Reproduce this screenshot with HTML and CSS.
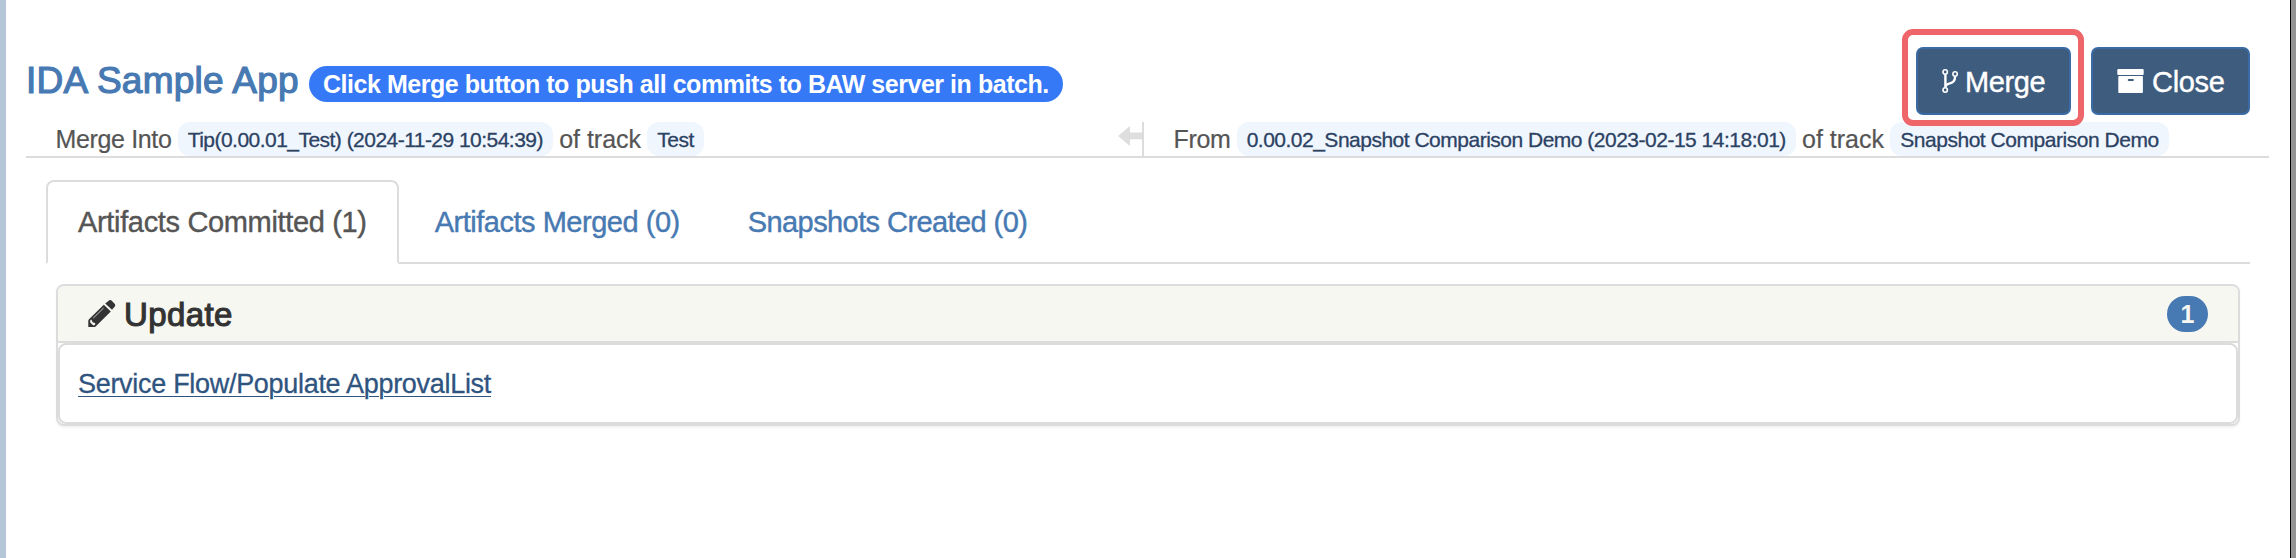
FILE: index.html
```
<!DOCTYPE html>
<html lang="en">
<head>
<meta charset="utf-8">
<title>IDA Sample App</title>
<link rel="stylesheet" href="styles.css">
</head>
<body>
<main class="page">
  <header class="topbar">
    <div class="heading">
      <h1 class="title">IDA Sample App</h1>
      <span class="hint">Click Merge button to push all commits to BAW server in batch.</span>
    </div>
    <div class="actions">
      <div class="highlight">
        <button class="btn" type="button">
          <svg class="icon-branch" viewBox="0 0 16 24" width="16" height="24" fill="none" stroke="#fff">
            <circle cx="3.2" cy="3" r="2.2" stroke-width="1.6"/>
            <circle cx="3.2" cy="21" r="2.2" stroke-width="1.6"/>
            <circle cx="13.1" cy="5" r="2.2" stroke-width="1.6"/>
            <path d="M3.4 5.5V18.6M13.1 7.4C13.1 13 10 14 7 14.6C4.6 15.2 3.6 16 3.4 18" stroke-width="2.4"/>
          </svg>
          <span>Merge</span>
        </button>
      </div>
      <button class="btn btn-close" type="button">
        <svg class="icon-archive" viewBox="0 0 27 24" width="27" height="24">
          <rect x="0.3" y="0" width="26.4" height="6" rx="1" fill="#fff"/>
          <rect x="1.3" y="7" width="24.6" height="17" rx="0.8" fill="#fff"/>
          <rect x="10.8" y="10" width="6" height="2" rx="0.8" fill="#3e5c7e"/>
        </svg>
        <span>Close</span>
      </button>
    </div>
  </header>

  <section class="merge-info">
    <div class="side side-target">
      <span class="label">Merge Into</span>
      <span class="tag">Tip(0.00.01_Test) (2024-11-29 10:54:39)</span>
      <span class="label of-track">of track</span>
      <span class="tag">Test</span>
      <svg class="arrow" viewBox="0 0 24 20" width="24" height="20"><path d="M0 10L12 0V6.5H24V13.2H12V20Z" fill="#dedede"/></svg>
    </div>
    <div class="side side-source">
      <span class="label">From</span>
      <span class="tag">0.00.02_Snapshot Comparison Demo (2023-02-15 14:18:01)</span>
      <span class="label of-track">of track</span>
      <span class="tag tag-wide">Snapshot Comparison Demo</span>
    </div>
  </section>

  <nav class="tabs">
    <a class="tab tab-active">Artifacts Committed (1)</a>
    <a class="tab">Artifacts Merged (0)</a>
    <a class="tab tab-tight">Snapshots Created (0)</a>
  </nav>

  <section class="panel">
    <div class="panel-head">
      <svg class="icon-pencil" viewBox="0 0 28 28" width="28" height="28">
        <path d="M17.2 3.4L21 0.4Q22.3 -0.5 23.5 0.6L26.6 3.7Q27.8 5 26.8 6.4L24 9.8Z" fill="#333"/>
        <path d="M15.8 4.8L22.8 11.6L7.6 26.4Q7 27 6 27H0.3V20.8Q0.3 20 1 19.3Z" fill="#333"/>
        <path d="M5.2 18.2L15.6 8" stroke="#c8c9c4" stroke-width="1" fill="none"/>
        <path d="M2.2 20.2L3.4 19.6L4.6 22.2L7.4 23.2L6.8 25L5.4 25.4L2.2 22.4Z" fill="#f6f7f0"/>
      </svg>
      <h2 class="panel-title">Update</h2>
      <span class="badge">1</span>
    </div>
    <div class="panel-item"><a class="link" href="#">Service Flow/Populate ApprovalList</a></div>
  </section>
</main>
</body>
</html>
```
FILE: styles.css
```
* { box-sizing: border-box; }

body {
  margin: 0;
  background: #fff;
  font-family: "Liberation Sans", Arial, Helvetica, sans-serif;
  color: #555;
}

.page {
  height: 558px;
  padding-left: 20px;
  padding-right: 22px;
  border-left: 6px solid #b4c6d8;
  border-right: 5px solid #949494;
  box-shadow: inset -1px 0 0 #000;
  overflow: hidden;
}

.topbar {
  display: flex;
  justify-content: space-between;
  align-items: flex-start;
  height: 122px;
  padding: 29px 19px 0 0;
}

.heading {
  display: flex;
  align-items: flex-start;
  padding-top: 29px;
}

.title {
  margin: 0;
  padding-top: 1px;
  width: 283px;
  font-size: 37px;
  line-height: 44px;
  font-weight: 400;
  letter-spacing: 0.25px;
  color: #4779b2;
  -webkit-text-stroke: 1.2px #4779b2;
  white-space: nowrap;
}

.hint {
  height: 36px;
  margin-top: 8px;
  padding: 1px 14px 0;
  border-radius: 18px;
  background: #3579f6;
  color: #fff;
  font-size: 25px;
  line-height: 35px;
  font-weight: 700;
  letter-spacing: -0.46px;
  white-space: nowrap;
}

.actions { display: flex; }

.highlight {
  position: relative;
  z-index: 1;
  height: 97px;
  width: 182px;
  padding: 12px 8px;
  border: 6px solid #ee656a;
  border-radius: 11px;
}

.btn {
  display: flex;
  align-items: center;
  width: 155px;
  height: 68px;
  padding: 0 0 0 24px;
  border: 2px solid #3a6ba5;
  border-radius: 7px;
  background: #3e5c7e;
  color: #fff;
  font-family: inherit;
  font-size: 29px;
  line-height: 62px;
  letter-spacing: -0.4px;
  -webkit-text-stroke: 0.4px #fff;
}

.btn span { padding-top: 2px; }

.btn-close {
  width: 159px;
  margin: 18px 0 0 7px;
  letter-spacing: -0.3px;
}

.icon-branch { margin-right: 7px; }
.icon-archive { margin-right: 8px; }

.merge-info {
  display: grid;
  grid-template-columns: 1116px 1fr;
  height: 36px;
  border-bottom: 2px solid #dcdcdc;
  font-size: 25px;
  line-height: 34px;
  letter-spacing: -0.35px;
  white-space: nowrap;
}

.side {
  display: flex;
  gap: 6.2px;
  padding-left: 29.5px;
}

.side-source { border-left: 2px solid #dcdcdc; }

.label { -webkit-text-stroke: 0.2px #555; }
.of-track { letter-spacing: 0; }

.tag {
  height: 34px;
  padding: 2px 10px 0;
  border-radius: 12px;
  background: #f0f6fe;
  color: #2c4263;
  font-size: 21px;
  line-height: 32px;
  letter-spacing: -0.53px;
  -webkit-text-stroke: 0.3px #2c4263;
}

.side-source .tag { letter-spacing: -0.5px; }
.side-source .tag-wide { letter-spacing: -0.46px; }

.arrow {
  margin: 4px 0 0 auto;
}

.tabs {
  display: flex;
  gap: 4px;
  height: 84px;
  margin: 22px 19px 0 20px;
  border-bottom: 2px solid #dcdcdc;
}

.tab {
  height: 84px;
  padding: 0 30px;
  border: 2px solid transparent;
  font-size: 29px;
  line-height: 80px;
  letter-spacing: -0.48px;
  color: #4779b2;
  -webkit-text-stroke: 0.4px #4779b2;
  white-space: nowrap;
}

.tab-tight { letter-spacing: -0.58px; }

.tab-active {
  border-color: #dcdcdc #dcdcdc #fff;
  border-radius: 8px 8px 0 0;
  background: #fff;
  color: #555;
  letter-spacing: -0.34px;
  -webkit-text-stroke-color: #555;
}

.panel {
  margin: 20px 29px 0 30px;
  border: 2px solid #dcdcdc;
  border-radius: 8px;
  box-shadow: 0 2px 2px rgba(0, 0, 0, 0.05);
}

.panel-head {
  display: flex;
  align-items: center;
  height: 57px;
  padding: 0 30px;
  border-bottom: 2px solid #dcdcdc;
  border-radius: 6px 6px 0 0;
  background: #f6f7f0;
}

.panel-title {
  margin: 0 auto 0 8px;
  padding-top: 2px;
  font-size: 33px;
  line-height: 55px;
  font-weight: 400;
  letter-spacing: 0.4px;
  color: #333;
  -webkit-text-stroke: 1.1px #333;
}

.badge {
  width: 41px;
  height: 36px;
  border-radius: 20px;
  background: #4779b2;
  color: #f6f7f0;
  font-size: 25px;
  line-height: 36px;
  font-weight: 700;
  text-align: center;
}

.panel-item {
  height: 81px;
  padding: 1px 18px 0;
  border: 2px solid #dcdcdc;
  border-radius: 8px;
  font-size: 27px;
  line-height: 77px;
}

.link {
  color: #2f5480;
  letter-spacing: -0.3px;
  text-decoration-thickness: 1px;
  text-underline-offset: 3px;
  -webkit-text-stroke: 0.3px #2f5480;
}
```
